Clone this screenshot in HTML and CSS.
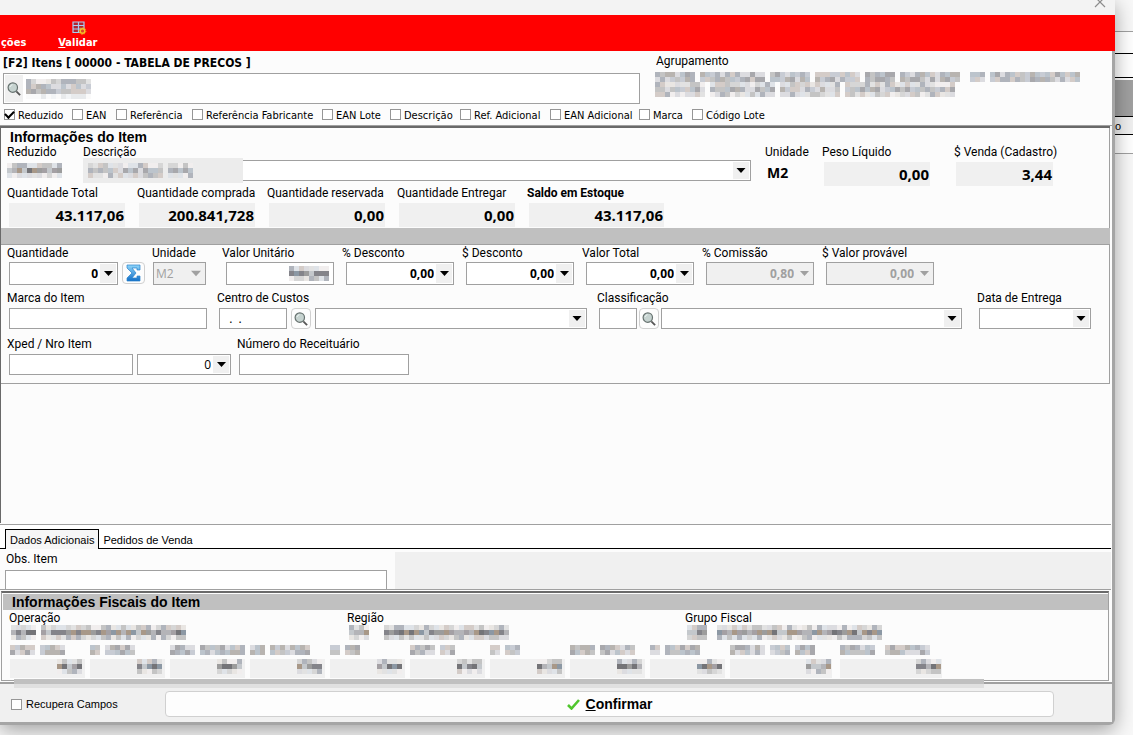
FILE: index.html
```html
<!DOCTYPE html>
<html lang="pt-BR">
<head>
<meta charset="utf-8">
<title>Itens</title>
<link rel="stylesheet" href="styles.css">
</head>
<body>
<svg class="defs" aria-hidden="true">
  <symbol id="lens" viewBox="0 0 14 14">
    <path d="M9.3 9.3l3.8 3.8" stroke="#555" stroke-width="1.8"/>
    <circle cx="5.8" cy="5.6" r="4.7" fill="#c6d3d0" stroke="#66716f" stroke-width="1.2"/>
    <path d="M3 5a3 3 0 0 1 2.500-2.300" stroke="#edf5f3" fill="none"/>
  </symbol>
  <symbol id="down" viewBox="0 0 9 5"><path d="M0 0h9L4.500 5z" fill="currentColor"/></symbol>
</svg>
<main class="window">
  <header class="titlebar">
    <button class="close" aria-label="Fechar"><svg width="12" height="12" viewBox="0 0 12 12"><path d="M1 1l10 10M11 1L1 11" stroke="#8d8d8d" stroke-width="1.200"/></svg></button>
  </header>
  <nav class="toolbar">
    <button class="tool tool-cut">ções</button>
    <button class="tool">
      <svg width="15" height="14" viewBox="0 0 15 14"><path d="M1 1h11v10.500H1z" fill="#b22432" stroke="#a9cdf2" stroke-width="1.200"/><path d="M1 4.500h11M1 8h11M6.500 1v10.500" stroke="#a9cdf2" stroke-width="1.200"/><circle cx="10.500" cy="10" r="2.300" fill="#d9402a" stroke="#f3c327" stroke-width="1.500"/><circle cx="10.500" cy="10" r="3.400" fill="none" stroke="#f0a91f" stroke-dasharray="1.300 1.300"/></svg>
      <span><u>V</u>alidar</span>
    </button>
  </nav>

  <section class="search">
    <div class="search-main">
      <label class="search-title" for="busca">[F2] Itens [ 00000 - TABELA DE PRECOS ]</label>
      <div class="search-box">
        <button class="search-lens" aria-label="Pesquisar"><svg width="14" height="14"><use href="#lens"/></svg></button>
        <i class="mosaic" data-runs="13" data-rows="4"></i>
        <input id="busca" type="text">
      </div>
    </div>
    <div class="group">
      <span class="label">Agrupamento</span>
      <i class="mosaic" data-runs="8 1 13 1 8 1 9 1 6 1 12 2 3 1 18" data-rows="2"></i>
      <i class="mosaic" data-runs="10 1 13 1 12 1 22" data-rows="3"></i>
    </div>
    <div class="checks">
      <label><input type="checkbox" checked>Reduzido</label>
      <label><input type="checkbox">EAN</label>
      <label><input type="checkbox">Referência</label>
      <label><input type="checkbox">Referência Fabricante</label>
      <label><input type="checkbox">EAN Lote</label>
      <label><input type="checkbox">Descrição</label>
      <label><input type="checkbox">Ref. Adicional</label>
      <label><input type="checkbox">EAN Adicional</label>
      <label><input type="checkbox">Marca</label>
      <label><input type="checkbox">Código Lote</label>
    </div>
  </section>

  <section class="item">
    <div class="item-info">
      <h2>Informações do Item</h2>
      <div class="row row-desc">
        <div class="field"><span class="label">Reduzido</span><i class="mosaic dark" data-runs="11" data-rows="3"></i></div>
        <div class="field"><label class="label" for="desc">Descrição</label>
          <div class="combo"><i class="veil"></i><i class="mosaic" data-runs="15 1 5" data-rows="3"></i><select id="desc"><option></option></select><svg class="arrow"><use href="#down"/></svg></div></div>
        <div class="field"><span class="label">Unidade</span><b class="unit">M2</b></div>
        <div class="field"><span class="label">Peso Líquido</span><output class="value">0,00</output></div>
        <div class="field"><span class="label">$ Venda (Cadastro)</span><output class="value">3,44</output></div>
      </div>
      <div class="row row-stock">
        <div class="field"><span class="label">Quantidade Total</span><output class="value">43.117,06</output></div>
        <div class="field"><span class="label">Quantidade comprada</span><output class="value">200.841,728</output></div>
        <div class="field"><span class="label">Quantidade reservada</span><output class="value">0,00</output></div>
        <div class="field"><span class="label">Quantidade Entregar</span><output class="value">0,00</output></div>
        <div class="field"><b class="label">Saldo em Estoque</b><output class="value">43.117,06</output></div>
      </div>
      <div class="band"></div>
      <div class="row row-values">
        <div class="field"><label class="label" for="qtd">Quantidade</label><div class="pair">
          <div class="combo"><input id="qtd" value="0"><button class="arrow" aria-label="Abrir"><svg><use href="#down"/></svg></button></div>
          <button class="mini sum" aria-label="Somar"><svg width="17" height="18" viewBox="0 0 17 18"><defs><linearGradient id="sg" x2="0" y2="1"><stop stop-color="#8fd6fa"/><stop offset="1" stop-color="#126fc7"/></linearGradient></defs><path d="M2 1h13v5h-3V4H7l4 5-4 5h5v-2h3v5H2v-3l5-5-5-5z" fill="url(#sg)" stroke="#2a83cb" stroke-width=".7"/></svg></button></div></div>
        <div class="field"><label class="label" for="un">Unidade</label><div class="combo off left"><select id="un" disabled><option>M2</option></select><svg class="arrow"><use href="#down"/></svg></div></div>
        <div class="field"><label class="label" for="vu">Valor Unitário</label><div class="combo masked"><input id="vu"><i class="mosaic dark" data-runs="8" data-rows="3"></i></div></div>
        <div class="field"><label class="label" for="pd">% Desconto</label><div class="combo"><input id="pd" value="0,00"><button class="arrow" aria-label="Abrir"><svg><use href="#down"/></svg></button></div></div>
        <div class="field"><label class="label" for="sd">$ Desconto</label><div class="combo"><input id="sd" value="0,00"><button class="arrow" aria-label="Abrir"><svg><use href="#down"/></svg></button></div></div>
        <div class="field"><label class="label" for="vt">Valor Total</label><div class="combo"><input id="vt" value="0,00"><button class="arrow" aria-label="Abrir"><svg><use href="#down"/></svg></button></div></div>
        <div class="field"><label class="label" for="co">% Comissão</label><div class="combo off"><input id="co" value="0,80" disabled><button class="arrow" aria-label="Abrir" disabled><svg><use href="#down"/></svg></button></div></div>
        <div class="field"><label class="label" for="vp">$ Valor provável</label><div class="combo off"><input id="vp" value="0,00" disabled><button class="arrow" aria-label="Abrir" disabled><svg><use href="#down"/></svg></button></div></div>
      </div>
      <div class="row row-refs">
        <div class="field"><label class="label" for="marca">Marca do Item</label><input class="box" id="marca"></div>
        <div class="field"><label class="label" for="cc">Centro de Custos</label><div class="pair">
          <input class="box code" id="cc" value="  .  .">
          <button class="mini" aria-label="Pesquisar"><svg width="14" height="14"><use href="#lens"/></svg></button>
          <div class="combo"><select aria-label="Centro de Custos"><option></option></select><svg class="arrow"><use href="#down"/></svg></div></div></div>
        <div class="field"><label class="label" for="cl">Classificação</label><div class="pair tight">
          <input class="box short" id="cl">
          <button class="mini" aria-label="Pesquisar"><svg width="14" height="14"><use href="#lens"/></svg></button>
          <div class="combo"><select aria-label="Classificação"><option></option></select><svg class="arrow"><use href="#down"/></svg></div></div></div>
        <div class="field"><label class="label" for="dt">Data de Entrega</label><div class="combo"><select id="dt"><option></option></select><svg class="arrow"><use href="#down"/></svg></div></div>
      </div>
      <div class="row row-order">
        <div class="field"><label class="label" for="xped">Xped / Nro Item</label><div class="pair order">
          <input class="box" id="xped">
          <div class="combo plain"><input aria-label="Nro Item" value="0"><button class="arrow" aria-label="Abrir"><svg><use href="#down"/></svg></button></div></div></div>
        <div class="field"><label class="label" for="rec">Número do Receituário</label><input class="box" id="rec"></div>
      </div>
    </div>
  </section>

  <div class="tabs" role="tablist">
    <button role="tab" class="tab active" aria-selected="true">Dados Adicionais</button>
    <button role="tab" class="tab" aria-selected="false">Pedidos de Venda</button>
  </div>
  <section class="extra">
    <div class="extra-obs"><label class="label" for="obs">Obs. Item</label><input class="box" id="obs"></div>
  </section>

  <section class="fiscal">
    <h2>Informações Fiscais do Item</h2>
    <div class="fiscal-top">
      <div><span class="label">Operação</span><i class="mosaic dark" data-runs="5 1 29" data-rows="3"></i></div>
      <div><span class="label">Região</span><i class="mosaic dark" data-runs="4 3 25" data-rows="3"></i></div>
      <div><span class="label">Grupo Fiscal</span><i class="mosaic dark" data-runs="4 2 33" data-rows="3"></i></div>
    </div>
    <div class="taxes">
      <div><i class="mosaic" data-runs="5 1 5" data-rows="2"></i><i class="mosaic dark num" data-runs="5" data-rows="3"></i></div>
      <div><i class="mosaic" data-runs="2 1 6" data-rows="2"></i><i class="mosaic dark num" data-runs="5" data-rows="3"></i></div>
      <div><i class="mosaic" data-runs="5 1 9" data-rows="2"></i><i class="mosaic dark num" data-runs="5" data-rows="3"></i></div>
      <div><i class="mosaic" data-runs="3 1 8" data-rows="2"></i><i class="mosaic dark num" data-runs="5" data-rows="3"></i></div>
      <div><i class="mosaic" data-runs="2 1 3" data-rows="2"></i><i class="mosaic dark num" data-runs="5" data-rows="3"></i></div>
      <div><i class="mosaic" data-runs="5 1 3" data-rows="2"></i><i class="mosaic dark num" data-runs="5" data-rows="3"></i></div>
      <div><i class="mosaic" data-runs="2 1 3" data-rows="2"></i><i class="mosaic dark num" data-runs="5" data-rows="3"></i></div>
      <div><i class="mosaic" data-runs="5 1 7" data-rows="2"></i><i class="mosaic dark num" data-runs="5" data-rows="3"></i></div>
      <div><i class="mosaic" data-runs="2 1 7" data-rows="2"></i><i class="mosaic dark num" data-runs="5" data-rows="3"></i></div>
      <div><i class="mosaic" data-runs="7 1 4 1 4" data-rows="2"></i><i class="mosaic dark num" data-runs="5" data-rows="3"></i></div>
      <div><i class="mosaic" data-runs="7 2 9" data-rows="2"></i><i class="mosaic dark num" data-runs="5" data-rows="3"></i></div>
    </div>
  </section>

  <footer class="footer">
    <label class="recover"><input type="checkbox">Recupera Campos</label>
    <button class="confirm"><svg width="13" height="11" viewBox="0 0 13 11"><path d="M1 6l3.500 3.500L12 1" fill="none" stroke="#50c62e" stroke-width="2.600"/></svg><span><u>C</u>onfirmar</span></button>
  </footer>
</main>
<aside class="behind">
  <div class="b-head"></div><div class="b-line"></div><div class="b-cell"></div><div class="b-gray"></div><div class="b-text">o</div><div class="b-last"></div>
</aside>
<script src="mosaic.js"></script>
</body>
</html>
```
FILE: styles.css
```css
* { box-sizing: border-box; }
body {
  margin: 0;
  min-height: 100vh;
  display: grid;
  grid-template-columns: 1fr 18px;
  background: #f8f8f8;
  color: #000;
  font: 12px/16px "Open Sans", "Noto Sans", sans-serif;
  overflow: hidden;
}
button, input, select { font: inherit; color: inherit; margin: 0; }
button { padding: 0; border: 0; background: none; }
h2 { margin: 0; font: bold 14px/18px "Liberation Sans", sans-serif; }
.defs { position: absolute; width: 0; height: 0; }

.window {
  position: relative;
  z-index: 1;
  display: flex;
  flex-direction: column;
  margin-bottom: 10px;
  background: #fcfcfc;
  border-right: 3px solid #a5a5a5;
  border-bottom: 3px solid #a5a5a5;
  border-bottom-right-radius: 6px;
  box-shadow: 0 5px 20px rgba(0, 0, 0, .36);
}
.titlebar { height: 15px; margin-right: -3px; background: #f3f3f3; overflow: hidden; display: flex; justify-content: flex-end; }
.close { width: 12px; height: 12px; margin: -4px 9px 0 0; }
.close svg { display: block; }
.toolbar { display: flex; gap: 32px; height: 36px; margin-right: -3px; background: #f00; color: #fff; }
.tool { display: flex; flex-direction: column; align-items: center; justify-content: flex-end; font: bold 11px/15px "DejaVu Sans Condensed", "DejaVu Sans", sans-serif; padding-bottom: 1px; }
.tool svg { margin-left: 4px; }
.tool-cut { padding-left: 1px; }

.search { display: grid; grid-template-columns: 637px 1fr; column-gap: 15px; padding: 2px 0 0 3px; height: 75px; border-bottom: 1px solid #a0a0a0; }
.search-title { display: block; font: bold 12px/20px "DejaVu Sans Condensed", "DejaVu Sans", sans-serif; }
.search-box { display: flex; align-items: center; height: 31px; border: 1px solid #a0a0a0; background: #fff; }
.search-lens { width: 18px; height: 27px; margin-left: 1px; background: #f0f0f0; display: grid; place-items: center; }
.search-box .mosaic { margin-left: 3px; }
.search-box input { flex: 1; border: 0; outline: 0; background: none; }
.group .label { margin: 0 0 3px 1px; }
.checks { grid-column: 1 / -1; display: grid; grid-template-columns: 68px 44px 76px 130px 68px 70px 90px 89px 53px auto; padding: 2px 0 0 1px; font: 11px/16px "DejaVu Sans Condensed", "DejaVu Sans", sans-serif; }
.checks label, .recover { display: flex; align-items: center; gap: 3px; white-space: nowrap; }
input[type="checkbox"] { appearance: none; width: 11px; height: 11px; border: 1px solid #969696; background: #fff; flex: none; }
.checks input { margin-top: -3px; }
input[type="checkbox"]:checked { display: grid; place-items: center; }
input[type="checkbox"]:checked::after { content: ""; width: 7px; height: 4px; border: solid #000; border-width: 0 0 2px 2px; transform: rotate(-45deg) translate(1px, -1px); }

.label { display: block; height: 16px; white-space: nowrap; font-family: Roboto, sans-serif; }
.item { flex: 1; margin: 0 2px 1px 0; border-left: 1px solid #696969; border-top: 2px solid #696969; }
.item-info { border-right: 1px solid #a0a0a0; border-bottom: 1px solid #a0a0a0; padding-bottom: 8px; }
.item h2 { padding-left: 9px; height: 16px; }
.row { display: grid; padding-left: 6px; }
.field { display: flex; flex-direction: column; gap: 2px; min-width: 0; }
.field > :nth-child(2) { margin-left: 2px; }
.combo { position: relative; display: flex; height: 21px; flex: 1 1 0; border: 1px solid #a0a0a0; background: #fff; min-width: 0; }
.field > .combo { flex: none; }
.combo input { width: 0; flex: 1; min-width: 0; border: 0; padding: 0 1px 0 0; text-align: right; background: none; outline: 0; font-weight: bold; }
.combo.plain input { font-weight: normal; }
.combo select { appearance: none; width: 100%; border: 0; padding: 0 2px; background: none; outline: 0; }
.combo .arrow { width: 16px; background: #f0f0f0; margin: 1px; display: grid; place-items: center; flex: none; }
.combo > svg.arrow { position: absolute; right: 0; top: 0; height: calc(100% - 2px); padding: 6px 3px; pointer-events: none; }
.combo .arrow svg { width: 9px; height: 5px; }
.combo.off { background: #f0f0f0; color: #a0a0a0; }
.off select { opacity: 1; color: #a0a0a0; }
.value { display: block; height: 24px; background: #f0f0f0; text-align: right; padding-right: 1px; font: bold 15px/24px "Open Sans", "Noto Sans", sans-serif; }
.box { height: 21px; border: 1px solid #a0a0a0; background: #fff; padding: 0 3px; min-width: 0; outline: 0; border-radius: 0; white-space: pre; }

.row-desc { grid-template-columns: 76px 668px 57px 108px 99px; column-gap: 0; }
.row-desc .field { gap: 0; }
.row-desc .field:nth-child(1) .mosaic { margin: 3px 0 0; }
.row-desc .field:nth-child(2) .combo { margin-left: 0; }
.row-desc .field:nth-child(n+3) { margin-left: 14px; margin-right: -14px; }
.row-desc .field:nth-child(5) { margin-left: 38px; margin-right: -38px; }
.row-desc .value { margin-top: 2px; }
.unit { font: bold 14px/26px "Open Sans", "Noto Sans", sans-serif; }
.row-desc .combo .mosaic { position: absolute; left: 4px; top: 2px; }
.veil { position: absolute; left: -1px; top: -3px; width: 160px; height: 25px; background: #ececec; }
.row-stock { grid-template-columns: repeat(4, 118px) 137px; column-gap: 12px; margin-top: -1px; padding-bottom: 1px; }
.band { height: 17px; background: #c0c0c0; border-bottom: 1px solid #a0a0a0; margin-right: -1px; }
.row-values { grid-template-columns: 145px 70px repeat(6, 120px); padding-bottom: 5px; }
.row-values .field { gap: 1px; }
.row-values .combo, .row-values .mini { height: 23px; }
.row-values .field:nth-child(1) { margin-right: 7px; }
.row-values .field:nth-child(2) { margin-right: 16px; }
.row-values .field:nth-child(2) .combo { margin-left: 1px; }
.row-values .field:nth-child(n+3) { margin-right: 8px; }
.row-values .field:nth-child(n+3) .combo { margin-left: 4px; }
.pair { display: flex; gap: 4px; }
.mini { width: 20px; height: 21px; flex: none; display: grid; place-items: center; border: 1px solid #d0d0d0; border-radius: 4px; background: #fdfdfd; }
.row-values .sum { width: 23px; height: 22px; }
.masked .mosaic { position: absolute; right: 4px; top: 3px; }
.row-refs { grid-template-columns: 200px 370px 370px 114px; column-gap: 10px; padding-bottom: 7px; }
.row-refs .field:nth-child(3) { margin-right: 5px; }
.code { width: 68px; }
.tight { gap: 2px; }
.short { width: 38px; }
.row-order { grid-template-columns: 224px 172px; column-gap: 6px; }
.order .box { width: 124px; }

.tabs { display: flex; height: 25px; padding: 4px 0 0 5px; border-top: 1px solid #a0a0a0; border-bottom: 1px solid #000; background: #fff; margin-right: 1px; font: 11px/18px "Liberation Sans", sans-serif; }
.tab { height: 20px; padding: 1px 4px 0; white-space: nowrap; }
.tab.active { border: 1px solid #000; border-bottom: 0; background: #f6f6f6; padding-top: 0; }
.extra { display: grid; grid-template-columns: 395px 1fr; height: 41px; background: linear-gradient(#f0f0f0, #f0f0f0) 395px 3px no-repeat #fcfcfc; border-bottom: 1px solid #a0a0a0; margin-right: 1px; overflow: hidden; }
.extra-obs { padding: 2px 8px 0 5px; }
.extra .label { padding-left: 1px; margin-bottom: 3px; }
.extra .box { width: 100%; height: 24px; }

.fiscal { margin: 1px 3px 0 1px; height: 90px; border: 1px solid #a0a0a0; border-top: 2px solid #696969; }
.fiscal h2 { background: #c0c0c0; padding-left: 9px; margin: 1px 0 0 1px; line-height: 16px; }
.fiscal-top { display: grid; grid-template-columns: 338px 338px 1fr; padding-left: 7px; }
.fiscal-top .mosaic { margin: -1px 0 0 2px; }
.taxes { display: grid; grid-template-columns: repeat(9, 80px) 110px 110px; padding: 5px 0 0 8px; }
.taxes > div { display: flex; flex-direction: column; gap: 4px; }
.taxes .num { background: #f0f0f0; height: 19px; width: 75px; padding-left: 47px; }
.taxes > div:nth-child(n+10) .num { width: 102px; padding-left: 76px; }

.footer { display: flex; align-items: flex-start; height: 40px; padding: 7px 58px 0 11px; margin-top: 1px; background: #f0f0f0; border-top: 2px solid #a0a0a0; position: relative; }
.footer::before { content: ""; position: absolute; left: 14px; top: -5px; width: 970px; height: 9px; background: linear-gradient(#c0c0c0 5px, #e0e0e0 5px); }
.recover { width: 154px; height: 26px; gap: 4px; font: 11px/16px "Liberation Sans", sans-serif; }
.confirm { flex: 1; height: 26px; display: flex; align-items: center; justify-content: center; gap: 6px; background: #fdfdfd; border: 1px solid #d0d0d0; border-radius: 4px; font: bold 14px/16px "Liberation Sans", sans-serif; }

.mosaic { display: block; height: min-content; flex: none; }
.mosaic svg { display: block; }

.behind { font: 11px/15px "Liberation Sans", sans-serif; }
.b-head { height: 32px; border-bottom: 1px solid #a0a0a0; }
.b-line { height: 22px; border-bottom: 1px solid #000; background: #fff; }
.b-cell { height: 24px; border-bottom: 1px solid #000; background: #fff; }
.b-gray { height: 39px; border-top: 2px solid #fff; border-bottom: 1px solid #000; background: #a0a0a0; }
.b-text { height: 18px; border-bottom: 1px solid #000; background: #f0f0f0; line-height: 18px; }
.b-last { height: 19px; border-bottom: 1px solid #a0a0a0; background: #fff; }
```
FILE: mosaic.js
```js
// Draws hidden values as 5px blocks; data-runs alternates inked and empty columns.
const CELL = 5;
const INK = ['#a8a8ac', '#b8b4b0', '#c8ccd4', '#bcc4cc', '#d4ccc8', '#c4c4c4', '#b0b4bc', '#dcdce0'];
const DARK = ['#84848a', '#9c9c9c', '#8c98a4', '#a89888', '#b4b4b8', '#747478', '#c4c8cc', '#a4a0a4'];
const PALE = ['#e2e2e2', '#e9e6e3', '#dfe3e8', '#d6d6d6', '#f1eeee'];
let seed = 7;
const pick = list => {
  seed = (seed * 1103515245 + 12345) % 2147483648;
  return list[Math.floor(seed / 65536) % list.length];
};
document.querySelectorAll('.mosaic').forEach(el => {
  const runs = el.dataset.runs.split(' ').map(Number);
  const rows = Number(el.dataset.rows);
  const cols = runs.reduce((a, b) => a + b, 0);
  const dark = el.classList.contains('dark');
  let rects = '', x = 0;
  runs.forEach((n, i) => {
    for (let c = 0; c < n; c++, x++) {
      if (i % 2) continue;
      for (let r = 0; r < rows; r++) {
        const edge = rows > 2 && (r === 0 || r === rows - 1);
        const colors = r === 3 ? ['#f2f4f6', '#e8eaec', '#fafafa'] : edge ? PALE.concat(INK.slice(4)) : dark ? DARK : INK;
        rects += `<rect x="${x * CELL}" y="${r * CELL}" width="5" height="5" fill="${pick(colors)}"/>`;
      }
    }
  });
  el.innerHTML = `<svg width="${cols * CELL}" height="${rows * CELL}" shape-rendering="crispEdges">${rects}</svg>`;
});
```
